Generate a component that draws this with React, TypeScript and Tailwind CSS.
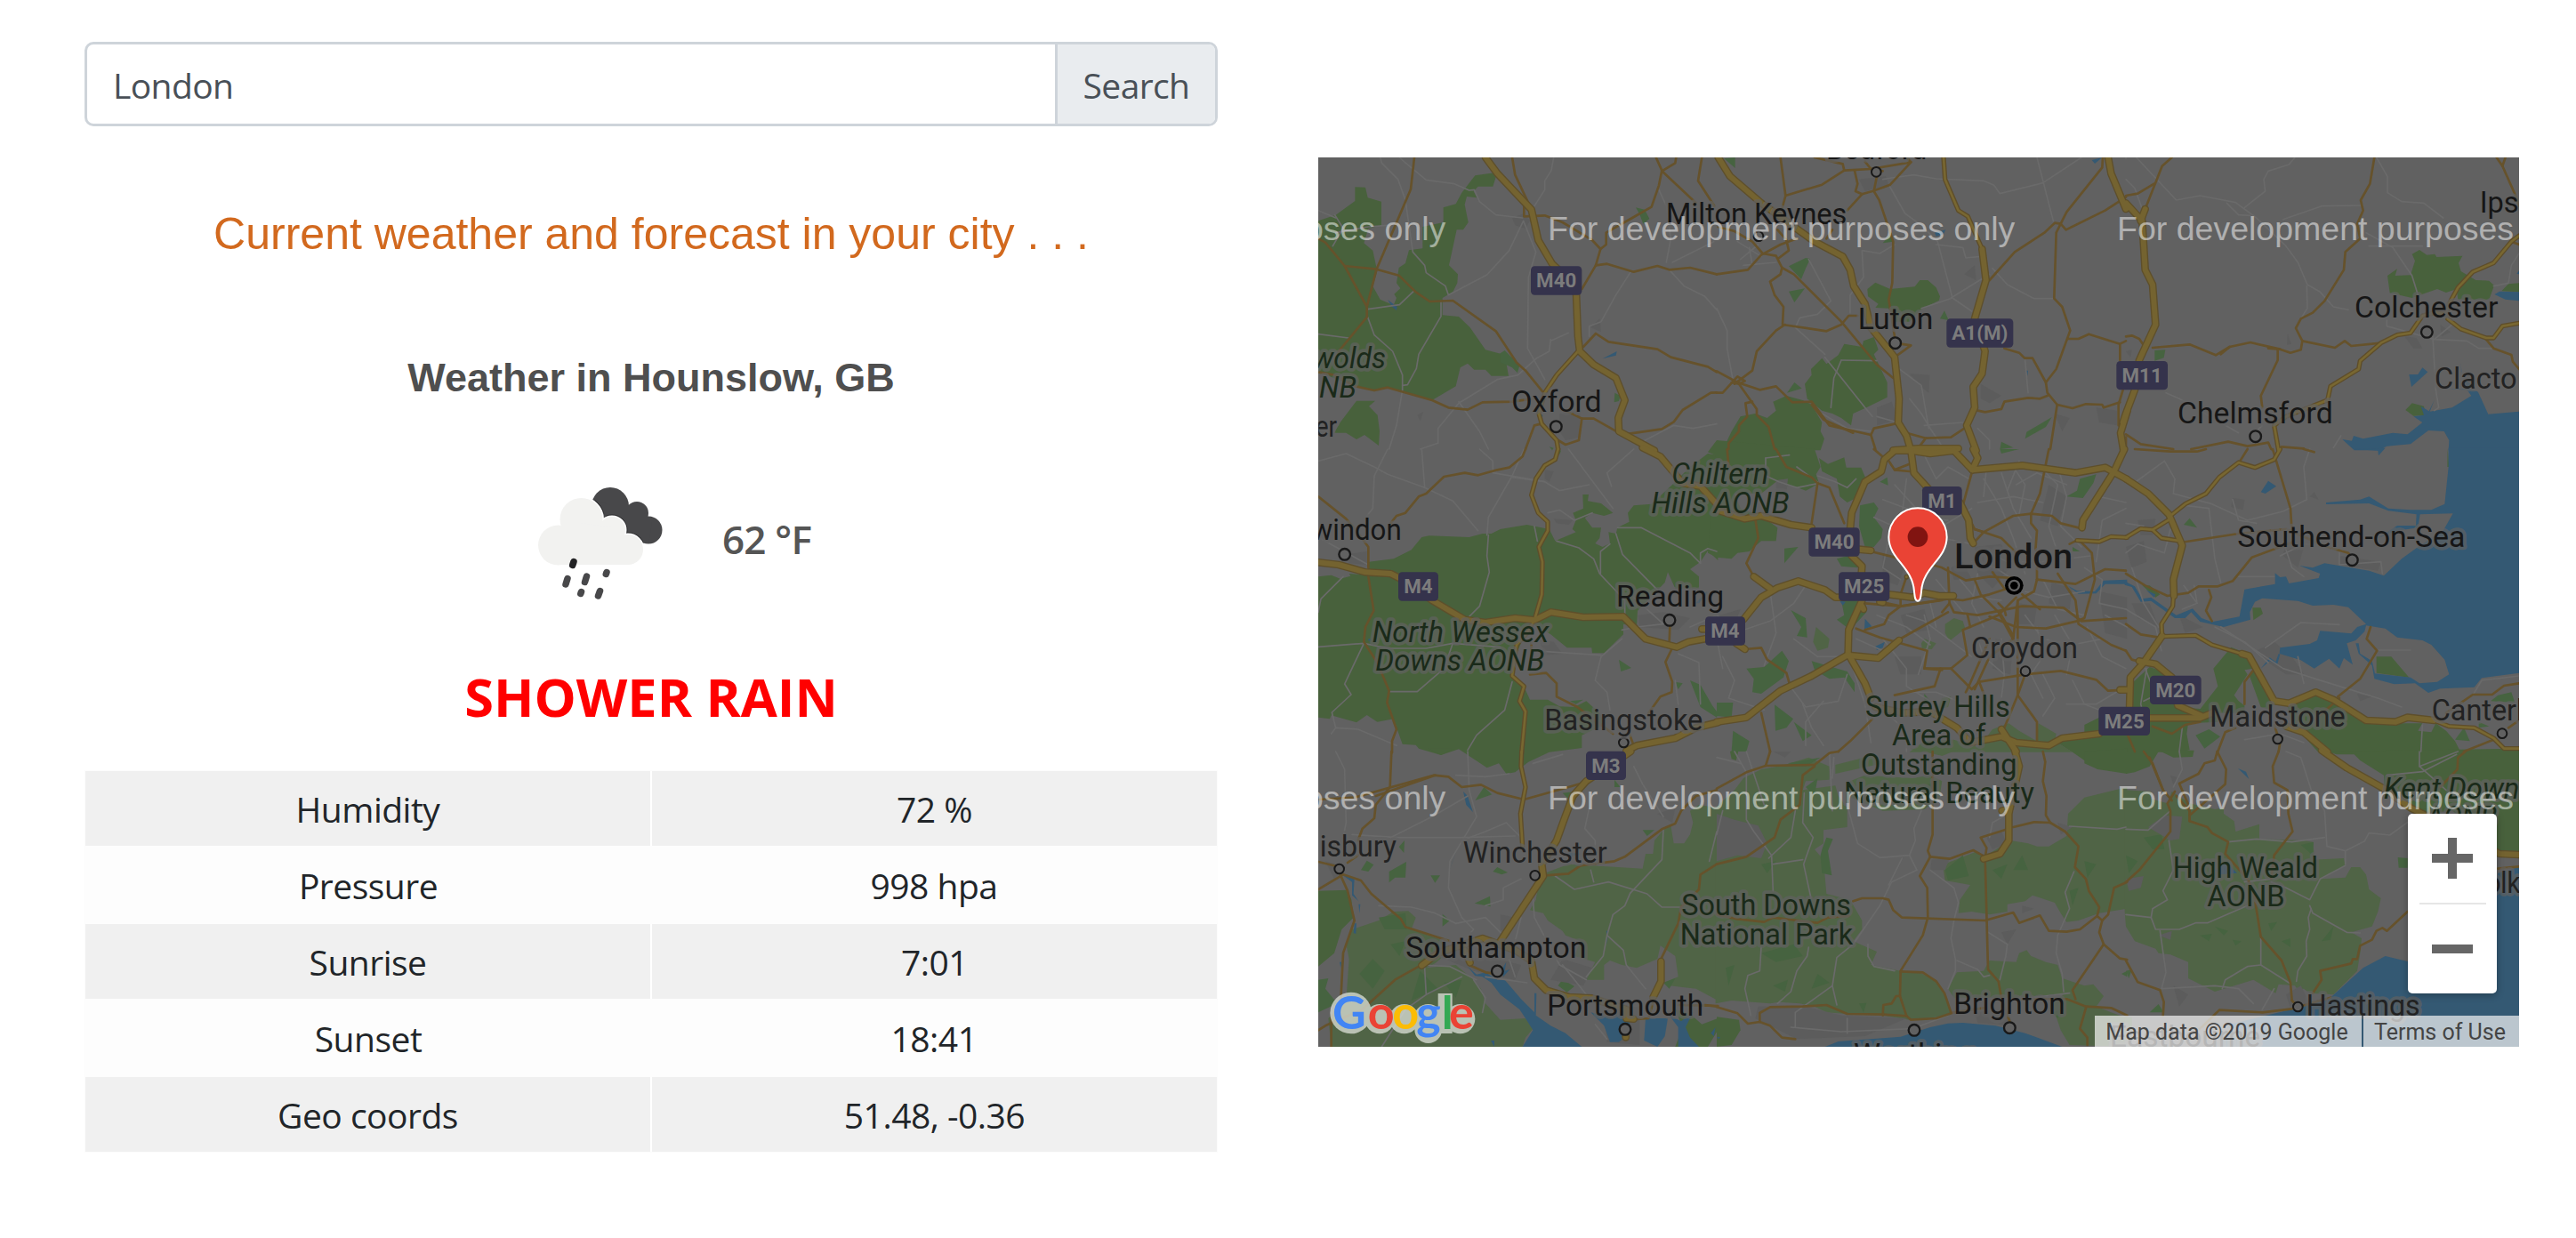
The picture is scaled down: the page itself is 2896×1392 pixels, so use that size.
import React from "react";

type Tile = {
  x: number;
  y: number;
  parks?: string;
  soft?: string;
  woods?: string;
  urban?: string;
  water?: string;
  minor?: string;
  roads?: string;
  trunk?: string;
  motorway?: string;
};

/* Map geometry: each tile holds shapes in its own coordinates; shapes are separated by ";" */
const tiles: Tile[] = [
  {
    x: -36,
    y: -36,
    parks:
      "36,250 95,230 160,183 160,136 195,137 203,172 249,185 249,265 205,276 190,325 220,350 235,420 220,470 245,515 290,535 300,510 292,497 313,478 300,460 308,408 330,393 342,349 388,343 388,270 458,255 458,205 500,193 520,155 565,97 640,86 625,134 575,134 560,150 571,172 537,168 530,195 542,255 525,280 503,280 477,400 507,430 505,460 490,490 455,510 455,568 510,573 548,610 600,685 645,697 665,700 678,773 620,773 600,752 562,752 540,731 515,745 500,808 420,855 270,810 230,822 160,808 36,760;165,857 228,857 207,875 236,905 243,960 240,1008 192,972 165,987 130,965 90,965 110,930",
    woods:
      "1107,205 1137,212 1153,243 1132,260 1120,228;1036,830 1055,840 1050,858 1034,862;650,697 665,687 715,738 708,763 690,745 650,727;815,1012 830,1016 825,1024",
    urban: "690,240 730,225 750,250 735,275 700,265;370,905 390,895 380,925;955,610 985,580 990,625;850,900 920,890 915,980 870,990 850,960",
    water: "995,715 1043,690 1040,704;270,516 302,540 300,552 285,540;785,900 793,905 790,925 785,915",
    minor:
      "36,632 138,645;203,548 310,533 358,487;203,575 225,635 287,690 320,770 320,820 300,940 275,1020;320,805 337,803 367,748 375,700 450,572 450,520;310,36 325,50 400,112 495,125 545,147 562,145 580,185 635,230 725,240;245,36 250,55 305,110 330,180 355,355 395,400 400,425 465,470 475,500 605,432 680,350 728,250 770,355 745,440 742,680 800,785;830,36 822,80 800,115 800,145 765,200;92,230 120,275 85,335;1185,145 1210,200 1225,310 1210,390;1090,422 1040,500 990,590 950,605 950,640;820,655 880,628;510,865 640,785 710,770 770,715 815,690 820,650;510,860 580,960 610,1020;1230,390 1370,320;1220,415 1270,470 1340,505 1380,550;1120,1000 1235,940 1300,950 1380,935;510,865 440,950 440,1000 380,1020;95,290 205,270 270,265;36,215 95,240",
    roads:
      "360,36 348,143 232,415 200,540 200,575 105,690;36,310 60,323 125,402 200,540;125,402 232,413 308,434 365,490 412,522 490,519 635,622 705,728 735,755 800,835;36,760 90,770 160,808 225,822 270,812 420,855 475,880 540,887 590,862 690,860 760,850;690,36 700,95 755,212;730,200 730,235 800,232 860,255 960,315 988,345 972,400 925,480;988,345 1007,330 1007,290 1095,240 1160,203 1185,130 1195,80 1175,36;1195,82 1240,55 1243,36;1195,82 1310,190;1330,36 1317,115 1372,200;972,400 1010,395 1100,422 1180,402 1220,415 1290,408 1380,430;930,675 972,630 1015,658 1180,683 1225,710 1350,742 1380,760;1085,968 1195,952 1235,928 1265,888 1360,830 1380,829;860,885 925,917 965,917 1050,965;925,917 915,990 870,1005 845,990;735,1020 765,940 785,935",
    trunk: "912,690 840,770 800,830 780,900 790,935 840,990 845,1020",
    motorway: "600,36 640,90 755,212 778,315 825,395 905,470 912,640 918,690 965,735 1040,780 1070,855 1048,915 1050,960 1170,1025",
  },
  {
    x: 1344,
    y: -36,
    parks:
      "508,480 535,458 585,480 668,472 685,450 712,450 740,475 753,505 750,518 690,548 650,590 600,590 580,545 535,543 545,530 510,505;297,800 320,770 318,750 355,713 370,733 410,703 430,665 490,675 495,655 530,642 545,685 530,700 575,795 575,845 505,880 460,900 453,940 420,915 390,900 355,890 305,850;190,860 235,840 290,855 320,870 355,930 350,960 363,985 350,1024 20,1024 50,960 80,910 130,900 170,915 200,890",
    woods:
      "243,403 300,375 315,378 300,410 285,447;243,488 297,478 262,525;768,553 782,585 753,580;237,830 262,795 287,815;1040,985 1045,962 1130,912 1110,945;960,995 1000,1015 955,1020;25,40 62,36 62,72;560,325 590,290 595,320",
    urban:
      "650,765 718,770 715,830 690,810;835,430 870,400 875,450;480,110 570,100 580,130 500,150;890,800 960,840 920,865 890,850;1140,900 1190,915 1165,960;1280,880 1350,890 1350,940 1290,930;540,880 590,860 610,920 540,940",
    water: "1265,45 1300,36 1275,57;735,290 772,280 765,295 740,302;1043,755 1050,755 1048,772",
    minor:
      "560,110 590,105 665,95 740,108 900,115 935,130 955,158 1100,122 1230,36;1080,36 1135,250;580,128 635,225 690,265 745,320 795,510 860,555;795,510 690,545;930,410 980,465 1070,512 1140,512;310,380 385,520 340,565 280,577 265,610 365,700;0,545 35,620 35,680 55,790;365,710 500,880 525,910;420,720 540,722;420,720 395,780 385,880;610,745 690,805 715,950;700,940 830,930;450,560 450,500 495,440 490,350 550,360 600,330;70,320 150,370;80,380 140,330;90,400 200,390;110,340 120,400;920,430 790,510;740,330 830,340 840,375 890,370;355,900 440,950 520,960;1040,720 1050,830;880,950 920,990 920,1020;540,910 610,930;650,850 690,900 720,950 760,1010",
    roads:
      "215,36 232,165 355,128 430,80 520,75 655,52 585,128 525,150 490,160 440,215;330,36 425,58 430,80;465,80 475,125 468,150 490,160;540,100 530,150 548,180 595,320 592,460 580,515 600,640;232,165 220,210;390,280 370,310;640,36 655,52;500,50 520,75 560,82;5,270 60,285 120,320 155,360 200,368 220,408 215,430 180,455 195,500 225,540 222,600 370,622 420,600 445,570 475,570;0,430 105,415 150,365 215,330 270,310;205,280 235,315 243,350 210,375;220,408 260,430 420,590 540,735 595,780;230,600 200,620 135,690 120,755 60,800;0,757 70,795 145,820 200,808 255,862 320,860 380,940 520,972 535,1020;0,830 20,830 70,775 95,790 75,800 50,795;75,800 135,885 135,905 175,945 195,1020;120,860 97,865 103,910 75,940 75,960 40,1000 40,1020;320,870 360,920 460,965;520,972 530,950 600,935;640,965 705,983 790,980 850,940;705,983 680,1016;600,710 655,670 620,665;920,450 1005,355 1105,290 1140,257 1160,260 1180,220 1300,70 1302,36;1160,260 1178,280 1310,215 1380,170;1160,260 1145,290 1138,512 1165,540 1192,620 1145,750 1110,795 1115,830 1148,870 1125,1020;1185,648 1220,648 1255,632 1360,665 1360,720;1360,665 1380,655;970,680 1020,695 1038,713 1065,713 1110,795;880,890 905,895 960,885 970,860 1050,847 1090,850 1115,840;1148,870 1200,882 1245,868 1300,870 1305,880 1360,862;1370,820 1355,870 1355,940",
    trunk: "765,36 770,110 815,215 847,235 895,345",
    motorway:
      "5,36 45,100 150,190 330,320 425,370 450,415 462,470 500,530 520,610 600,710 615,850 612,930 640,975 655,1025;895,345 908,450 870,580 905,690 895,765 865,810 870,880 843,940 875,1025;1320,36 1330,90 1380,210;1385,890 1362,965 1372,1025;595,1024 680,1018 815,1018",
  },
  {
    x: 2724,
    y: -36,
    parks:
      "882,435 915,412 908,435 960,433 975,385 965,362 990,348 1015,365 1042,362 1048,372 1135,368 1122,392 1130,420 1180,450 1225,452 1242,468 1225,515 1120,515 1115,480 1080,492 1050,480 1000,497 965,510 890,493;1267,487 1290,463 1326,460 1326,490;943,888 965,865 1005,875 1010,905 970,908",
    woods: "97,687 133,685 128,712 97,722",
    urban: "940,640 980,645 1000,680 970,680;1060,600 1095,625 1065,640;545,630 558,665 543,668;0,690 20,685 15,710",
    water:
      "1188,828 1222,902 1326,893 1326,1024 1088,1024 1090,990 1073,960 1020,957 960,1003 880,1010 855,1024 770,1024 730,987 762,992 768,975 800,985 900,965 950,970 1000,930 970,910 1005,905 995,875 1022,892 1040,855 1025,893 1100,880 1165,840 1150,820 1085,818 1130,815 1180,822;955,768 985,768 1000,745 1018,760 963,810;1243,498 1260,488 1326,490 1326,520 1280,515;1318,428 1326,418 1326,430;1128,730 1134,765 1130,760;1145,790 1165,800 1150,815",
    minor:
      "35,36 170,180 250,165 370,188 440,240 540,335 580,390 612,465 655,490 700,540 750,550;570,36 550,60 480,82 465,110 470,150 400,205;530,245 660,200 800,198;845,36 882,100 882,155 930,185 1005,190 1070,240;810,290 900,340 965,435 985,500;135,830 180,850;1035,640 1045,820 1055,880 1040,890;610,470 612,545 590,580;880,580 880,605 1040,650 1150,655 1190,680 1240,680;1240,470 1290,460 1300,400 1326,360;340,190 380,230 420,232;0,110 30,140 55,210;820,335 1000,335;0,0 0,40;1040,650 1100,600;460,940 430,970;700,1015 725,975;180,850 380,965",
    roads:
      "155,36 122,65 65,210;0,165 40,158 95,125;838,36 823,125 792,180 800,215 780,260 790,310 740,355 735,415 670,520 630,560 590,580 573,612 595,655 590,685 555,695 520,683 420,660 350,675 303,703 215,667 90,678;350,675 320,700;480,680 520,683;595,655 705,678 738,655 760,672 860,662;512,685 512,720 455,840 460,880;0,640 20,637 45,648 60,670;1250,36 1270,65 1310,155 1326,200;1215,650 1240,680 1300,702 1305,725 1326,750;0,970 50,1003 160,1020;220,1020 345,995 410,1010 480,998 490,1020;525,1012 600,1018;1280,36 1270,65;1300,320 1326,330;0,980 0,1020",
    trunk:
      "1326,300 1300,320 1240,392 1170,422 1120,475 1090,530 1080,565 1040,560 1000,570 960,628 915,635 860,662 790,722 785,750 690,808 680,855 540,910 500,940 515,1025;1085,580 1130,615 1215,645 1240,645 1270,605 1326,595",
    motorway: "0,190 55,250 65,415 90,465 100,600 45,720 30,820 0,900 -10,930;65,210 50,250",
  },
  {
    x: -36,
    y: 984,
    parks:
      "207,380 290,370 350,340 385,297 410,292 545,297 590,285 620,285 650,270 740,255 815,270 835,310 905,280 893,270 905,240 895,215 930,200 928,153 948,153 945,175 990,183 1030,215 1000,225 960,215 935,232 960,265 990,265 985,300 970,318 995,330 1020,318 1015,280 1040,285 1045,265 1085,245 1080,215 1100,190 1160,185 1230,120 1290,60 1350,15 1384,20 1384,375 1350,343 1325,380 1290,405 1320,430 1320,470 1240,470 1215,415 1205,450 1113,545 1110,600 1065,590 1065,625 1000,688 960,688 958,670 875,670 820,625 760,590 735,620 700,700 690,763 735,812 750,845 810,845 850,868 900,870 940,850 985,890 1000,930 925,965 925,1008 815,1022 745,1055 700,1090 670,1095 645,1060 605,1075 510,1012 450,1032 375,1010 365,998 320,995 290,910 235,920 200,897 165,922 80,898 75,910 36,905 36,430 80,425 110,437 145,428 140,420 205,425",
    woods: "1050,710 1092,738 1057,750;1290,780 1325,795 1365,865 1384,890 1380,905 1325,870;1240,785 1265,790 1250,810;840,0 855,5 850,18;885,850 930,845 905,860",
    urban: "830,235 895,240 880,255 840,250;780,640 830,650 860,690 800,695;1115,560 1200,550 1290,570 1250,610 1120,600;130,355 200,345 200,390 140,385;800,70 830,75 815,110 800,100",
    water: "1310,520 1345,480 1352,483 1320,520;205,640 212,640 212,646 205,646;640,655 650,655 650,660",
    minor:
      "610,290 605,360 613,415 580,530 540,570;840,310 915,333 965,370 985,420 1070,510 1070,560;1020,320 988,345 988,420;1045,265 1125,265 1290,350 1325,385;1040,285 1062,355 1180,475;1325,385 1325,350 1350,335 1380,345;36,667 190,655 270,672 400,672 490,655 650,668;490,655 460,740 370,818 275,818;190,655 125,792 147,828 82,888 95,940 80,960;120,430 45,505 36,550;690,785 665,880 570,965 540,1015;385,0 395,130 490,175 575,275;395,130 270,85 225,60 130,15 36,40;270,0 225,90 220,200 200,225;730,0 690,90 610,230 605,290;690,95 800,110 850,140 950,120;880,0 1030,200;1025,125 1010,80 1100,0;580,0 625,40 625,80 800,110;760,680 990,695;1060,610 1110,600 1200,590;1060,640 990,700 970,780 1010,820 1020,880;1250,690 1320,720 1325,860;765,260 775,310;810,215 850,205 900,240 960,215;40,300 205,390;95,940 170,945 300,1000;1100,500 1200,590;1290,600 1380,560;1240,780 1255,900",
    roads:
      "735,0 725,25 680,62 640,70 575,88 530,80 460,93 400,150 375,160 330,215 300,225 280,250;36,160 130,235 160,270 205,330 205,400;205,430 223,545 195,600 190,650 235,720 275,815 268,855 300,945 285,985 285,1024;755,650 755,700;750,760 805,755 840,790 840,835 910,870 950,900 1030,960;1222,600 1220,650 1228,675 1207,718 1230,785 1228,820 1190,835 1150,890;1085,960 1100,1000",
    trunk:
      "845,0 835,35 800,55 770,100 755,155 778,215 810,245 810,275 780,330 792,380 790,490 765,577;765,577 740,620 705,660 690,765 730,800 715,850 735,885 722,1025",
    motorway:
      "36,382 105,390 195,415 280,420 330,445 420,510 530,575 600,585 700,570 765,577 820,550 930,567 1065,565 1140,640 1245,668 1285,650 1350,638;1130,-5 1190,25 1265,115 1325,125 1384,190;1075,1018 1110,1000 1240,975 1310,940 1384,922;1330,607 1350,607",
  },
  {
    x: 1344,
    y: 984,
    parks:
      "-4,0 -4,20 -30,10 0,-30 330,0 350,60 335,85 345,115 320,130 300,140 270,128 240,122 200,110 150,150 60,150 80,200 150,225 205,265 200,310 150,310 110,345 70,350 50,370 0,365 -30,350;345,30 375,50 430,28 437,62 487,62 503,100 470,165 440,180 415,160 405,100 355,75;1140,985 1240,965 1240,930 1290,905 1300,960 1384,955 1384,1070 1285,1080 1240,1050 1200,1022",
    soft: "770,590 800,570 830,580 838,605 785,647 770,620;690,655 700,640 740,655 725,675 692,672;335,600 380,640 375,670 340,680 325,650;760,840 790,835 780,870 740,880;880,1005 900,985 930,945 985,925 1020,950 1080,985 1085,925 1145,960 1140,985 1200,1022 650,1022 700,985 800,980",
    woods:
      "483,190 530,180 545,200 530,230 560,270 555,300 530,330 500,330 480,260;405,370 440,360 480,380 475,400 420,395;420,510 500,505 505,550 450,610 405,575 430,560;228,335 275,330 228,385;250,543 300,570 305,635 270,630 285,600;100,740 160,735 220,680 243,715 225,770 150,825 120,820 125,775;320,715 370,730 440,750 465,790 465,820 430,770 380,775 330,745;195,862 258,910 235,940 198,950;55,950 110,985 100,1020 50,1020;260,920 320,965 290,985;0,855 55,855 50,905 0,900;550,110 575,95 578,122;1180,160 1215,140 1225,100 1280,85 1270,115 1235,165;955,0 1020,0 960,15;700,825 725,855 700,860;1200,330 1225,345 1200,345",
    urban:
      "870,330 960,320 990,400 930,470 880,420;1020,520 1080,530 1070,590 1010,590;200,105 240,100 235,150 200,150;620,560 700,540 720,610 640,620;1120,120 1180,160 1150,260 1090,240;1290,480 1384,500 1384,640 1310,620;600,700 690,700 690,760 620,760;790,400 830,380 860,440 800,440;940,640 1000,650 990,760 930,740;560,350 640,380 610,460 560,440;1130,450 1200,470 1190,540 1120,520;10,560 80,540 60,590 20,600",
    water: "1180,458 1215,478 1275,480 1305,443 1384,440 1384,455 1310,455 1280,487 1220,488;415,512 435,515 425,527;500,572 523,598 498,607;535,665 567,650 560,670 540,678",
    minor:
      "165,30 245,20;165,30 165,90 210,110 270,130 345,115;600,120 700,230 780,240;560,170 640,200 760,300 860,320;530,230 640,280 760,260 860,200;640,100 620,260 640,420;700,20 740,100 780,60 850,100;900,100 960,200 1000,300 1040,420;960,80 1000,200 1060,300;880,180 1000,160 1100,180;1000,60 1040,120 1020,220;1090,60 1150,120 1120,260 1160,380;1150,60 1180,160 1160,260 1230,330;900,340 980,380 1100,380 1260,360;860,380 940,400 1000,440;880,420 860,520 900,600;820,440 870,500 960,510;640,560 700,580 780,640 860,700;540,560 640,600 720,660;560,640 640,740 640,800 720,850;700,560 720,640 680,760;1040,480 1120,500 1240,480;1040,560 1100,640 1200,660 1300,640;1080,600 1100,700 1060,760 1100,840;1140,560 1200,660 1180,760;1250,600 1300,700 1380,740;1240,400 1300,440 1290,520 1380,540;1280,380 1300,240 1380,200;1290,160 1380,180;960,640 970,760 960,840;880,640 900,700 970,760;1100,760 1140,840 1100,900;1200,780 1240,860 1290,880;0,560 60,620 180,580 260,520 300,460;180,480 200,620 160,730;260,640 340,700 420,700;20,700 60,780 40,840 160,880;290,860 320,940 360,1000;240,790 300,870 410,850 440,760;300,1000 300,920 360,850;460,740 500,860 520,990;560,860 640,900;640,820 740,820 860,870;1180,860 1280,860 1380,800;1020,40 980,140;910,60 900,160;600,260 640,360 700,360;740,440 840,560;720,520 740,600;580,300 560,400 620,440;1100,440 1150,540 1240,560;340,90 400,110 440,130 470,100;470,640 560,680;0,640 20,740;270,60 345,115;1010,120 1080,80 1180,120;1310,560 1384,600;560,880 640,950 640,1020",
    roads:
      "520,345 600,365 690,380 760,400 840,443 920,430 1000,435;640,430 620,490 620,530 580,560 565,590 500,610;500,520 620,530 780,505 830,510 920,490 980,470;780,400 785,520 800,550 880,560 1030,530 1170,535 1230,580 1380,570;550,515 620,530 760,510;470,605 550,635 710,680 700,740 790,740 845,695 830,610 950,560 1010,500;610,645 690,600 780,550;870,270 900,280 1000,225 1060,218 1130,225 1160,250 1220,265;870,270 960,300 1010,350;865,318 900,280;1060,218 1060,250 1080,275 1075,340;1080,400 1080,440;1120,0 1090,150 1060,218;1190,320 1220,305 1265,350 1275,440 1240,570 1215,580 1110,605 1010,600 920,565;1080,440 1210,455 1310,405 1380,410;1080,440 1070,480 1015,510 1000,640;1015,510 1015,830 1080,920 1080,1000;1150,420 1210,510 1220,590 1330,660 1380,680;955,560 1010,660;920,640 850,800 840,820;1000,640 920,700 870,810;790,740 860,810 885,785 1040,760 1160,748 1280,778 1320,815 1384,812;755,740 735,800 600,830;885,785 930,900;525,910 450,985 410,1020;150,890 180,1020;130,235 140,300 100,385 125,430;95,675 150,670 170,710 235,755 245,790;340,115 380,130 430,250;340,115 320,250;200,0 235,60 320,95 340,115;35,0 40,60;580,40 600,70 650,75;530,0 565,30;860,80 830,190 870,270;870,440 890,490 960,560 1000,630;1015,830 970,940;785,520 760,550;845,555 855,600;1030,490 1090,540;930,415 970,470;950,520 970,540 975,560;1040,760 1015,830;600,70 650,50;700,740 760,745",
    trunk: "1215,308 1290,312 1330,295 1384,298;640,430 640,432",
    motorway:
      "865,0 880,30 862,70 800,5 720,15 655,5 600,5 565,35 555,75 500,110 455,215 450,270;455,360 490,395 488,420;490,510 445,610 443,690 500,790 520,840;535,870 630,890 720,885 810,940 855,990 960,970 1010,990 1120,1000 1165,975 1290,960;862,70 1030,55 1210,80 1310,62 1384,102;655,5 665,80 720,140 820,180 850,240 855,300 865,318;0,205 95,235 150,225 250,255 320,265;480,338 520,342;90,575 150,500 205,468 275,445 365,475 400,500 430,500;580,490 660,500 700,485 750,495 798,495;125,430 180,470;65,655 95,675;0,920 100,905 215,815 320,765 440,695 545,705 615,645;1375,0 1340,75 1235,240 1232,265;960,945 1010,1020;490,530 495,540;550,515 560,517;1360,812 1384,812",
  },
  {
    x: 2724,
    y: 984,
    parks:
      "355,668 385,680 430,700 430,740 400,745 410,760 365,830 380,850 400,865 400,890 240,890 310,800 295,740;415,760 435,740 500,850 490,880 455,870;20,790 80,735 110,745 170,800 170,870 300,880 310,920 210,925 205,960 215,1015 180,1022 0,1022 0,960 20,950;540,850 640,825 720,850 790,905 920,925 1000,925 985,950 1030,955 1045,925 1080,950 1110,985 1130,1024 650,1024 560,925;845,700 895,700 955,770 845,755;427,535 455,535 462,555 430,577;55,460 80,460 115,490 100,500;1085,0 1090,60 1084,60",
    woods: "1230,850 1255,830 1300,820 1312,855;1110,980 1140,940 1160,985;235,965 280,945 318,970 265,1010;195,255 215,233 240,265;1190,920 1225,935 1190,940",
    urban:
      "360,165 400,170 395,205 355,195;620,160 635,145 650,170;0,330 60,310 70,380 20,400;20,520 80,520 110,600 40,570;440,680 500,650 560,700 600,760 540,760 480,720;780,825 830,835 790,850;540,310 600,330 580,400 530,360;720,360 860,380 850,410 720,390;40,240 100,235 90,290 50,290;180,560 260,600 200,620",
    water:
      "1088,-4 1088,60 1075,185 1030,205 960,205 885,200 820,160 790,170 675,180 675,186 820,183 885,208 980,220 978,258 915,258 850,300 915,275 985,265 992,220 1103,217 1070,275 985,330 930,370 870,427 820,410 670,385 630,400 585,393 655,420 650,435 550,453 540,430 520,432 503,418 503,455 400,473 383,565 290,583 255,570 225,538 170,560 85,500 55,505 30,463 0,448 -4,448 -4,458 20,465 50,515 85,512 165,570 200,570 220,550 250,582 330,600 420,575 418,550 435,515 460,503 580,512 630,528 700,525 750,533 810,590 780,600 760,622 655,613 645,645 620,657 520,670 518,690 590,712 635,740 685,707 720,740 735,705 765,727 745,655 775,645 805,615 810,595 875,605 915,635 1000,645 1030,660 1075,710 1090,760 1050,785 990,790 960,770 840,757 830,715 790,690 785,655 775,655 785,690 830,730 838,775 905,793 975,790 1020,822 1060,808 1175,803 1200,772 1326,755 1326,-4;455,145 480,107 507,125 470,150;770,0 875,-4 852,22 850,5;455,740 485,703 505,718 515,690 520,692 510,728 485,715;68,475 100,490 95,500",
    minor:
      "130,40 165,100 160,150 290,185 410,240 530,210 610,170 600,60 620,0;200,190 280,200 300,370 320,450;0,350 40,320 130,350 150,270;320,600 530,740 640,775 850,840 930,870;470,670 590,585 720,592;530,310 560,400 600,430;720,350 720,390 860,380 865,420;195,460 240,520 190,540;65,740 100,830 60,850;1000,930 995,1020;1170,830 1200,780 1326,765;380,430 500,430;850,678 960,678;580,700 600,790;130,40 20,120;0,540 100,600 120,680;20,400 60,520 110,600;360,170 380,240 440,250;230,460 240,520;300,600 400,650 480,720;70,740 50,860 60,900;190,940 180,1020;0,250 60,260;520,360 600,320 700,330;400,980 520,960 600,990",
    roads:
      "495,0 555,200 560,280;185,315 380,285 540,270 680,330 750,350 760,365;0,420 65,460 140,495 210,485 245,463 310,463 360,445 425,365 560,315;280,475 288,500 270,545 290,580;0,590 50,625 110,635;715,835 790,775 847,680 812,640 825,600;430,745 400,785 400,860;500,930 520,990 515,1020;310,1020 335,955 370,940;0,680 20,710 40,715;90,935 155,960 200,930 250,920;1080,890 1170,828 1235,828 1275,798 1326,790;1140,1020 1240,980;1290,940 1326,915;410,0 385,40;0,950 30,1020;30,0 150,8 240,8 270,0;600,0 635,10;640,910 720,840",
    trunk:
      "520,0 500,35 435,62 380,45 315,95 270,150 200,185 150,225;0,298 50,268 90,272 150,235;90,272 120,300 185,310;160,500 158,530 120,590 122,630;122,632 235,628 290,660 390,690;1040,915 1090,935 1175,940 1240,975 1275,1010 1326,1010",
    motorway:
      "0,100 75,150 145,220 190,325 160,440 162,495;122,630 60,720 15,770 12,880;45,715 100,725 155,770 175,865 255,900;75,907 250,907 290,890;390,690 415,697 500,850 550,857 640,820 700,845 810,915 910,920 950,905 1040,915;540,935 600,955 680,1022",
  },
  {
    x: -36,
    y: 2004,
    parks: "36,470 135,467 148,500 155,560 115,600 90,680 36,725;1240,870 1290,885 1330,920 1384,900 1384,940 1350,996 1240,996 1265,930;410,-10 450,12 490,-10",
    soft:
      "150,600 240,570 290,540 340,538 365,560 350,600 450,635 470,680 430,715 400,730 500,720 560,770 585,800 600,850 650,905 735,900 760,935 735,965 725,996 80,996 70,900 130,840 140,700 130,650;780,440 800,410 840,395 880,380 1130,395 1140,345 1165,345 1170,300 1200,265 1225,250 1235,310 1270,310 1290,280 1300,240 1290,200 1320,180 1384,190 1384,840 1310,800 1220,790 1200,780 1250,760 1240,690 1190,655 1180,700 1110,730 1060,720 1020,705 1000,720 1000,770 940,770 970,710 900,690 920,640 870,620 860,605 810,570 795,545 750,535 770,500",
    woods:
      "565,165 595,120 622,145;275,405 333,372 330,425 295,425 275,442;180,400 200,368 223,382 205,405;415,418 447,418 430,443;563,512 615,488 617,523;455,548 480,570 455,590;308,322 327,300 325,342;1130,265 1170,265 1145,285;625,405 640,390 675,408 655,415;845,790 860,768 900,792 875,812;1035,95 1055,120 1035,120;36,770 70,765 60,800 100,850 36,880;240,560 330,545 335,600 260,600;175,750 220,700 260,740 220,800;380,740 440,800 350,840;280,650 330,640 310,690;350,940 400,925 380,975;460,780 520,770 500,830;860,140 900,135 885,165;1200,780 1240,765 1220,800",
    urban: "440,690 530,640 640,700 720,720 700,770 560,740;860,700 960,730 930,790 820,770;650,550 700,560 680,620 650,600;1000,870 1120,860 1120,990 1010,980;60,370 130,390 90,430;1180,210 1240,190 1230,240",
    water:
      "540,725 570,752 600,745 640,770 665,770 720,835 765,880 765,815 772,815 770,890 820,925 870,950 925,996 725,996 760,940 735,900 725,885 715,870 650,820 620,780 590,760 565,757;955,880 1030,900 1060,870 1090,900 1075,960 1050,980 1020,980 1000,925;1140,900 1215,900 1205,960 1180,996 1135,975;1220,890 1260,910 1300,880 1275,930 1290,965 1320,996 1250,996 1250,930;115,415 158,430 155,480 172,505 150,485 150,440;525,135 540,150 558,205 535,180;500,340 475,412 490,370;158,580 165,580 163,615 155,612;655,735 670,710 665,740 682,735 660,760;618,975 630,975 630,996;880,340 920,345 890,355;1360,950 1376,930 1370,960;172,515 178,515 175,545;108,710 114,710 112,730;1008,605 1014,605 1010,650",
    minor:
      "95,0 125,60 130,240 120,290;150,280 300,290 520,290 700,285;540,0 545,130 570,220 480,370 475,460 520,560;240,520 350,525 430,545 500,580;835,420 900,465 1015,440 1145,480 1195,525 1255,525;1088,478 1070,520 1030,550 1010,620 997,690 940,760;1010,620 1065,670 1075,720 1140,800;955,400 965,440;1200,265 1195,365 1088,478;760,490 765,560 850,720 940,770;600,520 660,500 660,460 720,430;395,730 400,820 330,870 250,996;560,770 600,830 590,880;400,820 520,760;950,190 935,260 970,300 970,380;1100,50 1130,110 1200,220;970,920 1010,970;730,300 670,240 600,270 520,300;280,290 420,220 540,150;500,80 600,85 680,75;760,40 860,10;500,580 600,560 660,620;470,700 560,600 520,560;380,720 480,725 570,770;600,760 740,780;1380,270 1355,370;720,560 700,640;860,720 940,820;680,700 700,760",
    roads:
      "283,0 278,120 230,180 225,225 185,260 170,300;36,162 160,155 425,80 475,85 520,120 585,112 640,140 730,162 880,120 950,100;230,150 430,80;36,372 110,390;36,465 120,415 180,435 215,480 315,565 330,592 480,640;110,415 135,470 158,570 120,680 112,840 80,900 80,996;375,725 295,770 185,870 60,925 36,940;800,418 880,412 920,385 1035,370 1070,355 1195,262 1240,243 1260,200 1310,150 1380,130;1380,380 1325,415 1320,465 1260,525 1250,580 1192,700;545,720 600,745 640,750;1340,855 1380,860;135,375 170,350;1080,905 1150,900 1170,830;1250,855 1384,858",
    trunk: "722,0 720,50 735,120 718,210 725,320",
    motorway:
      "1090,0 940,100 895,150 865,230 840,300 790,380 795,420 650,640;385,722 440,680 590,630 700,670 755,705 765,765 805,805 880,828 960,832 1075,870;548,712 530,670;1192,708 1192,775 1165,830;1075,870 1075,900 1100,902;1073,960 1073,964",
  },
  {
    x: 1344,
    y: 2004,
    parks: "0,895 75,905 80,940 50,990 0,996;1240,0 1384,-10 1384,75 1285,60 1240,40;45,0 75,-10 65,30 50,25",
    soft:
      "650,-10 820,-10 760,15 720,5;-4,190 60,130 90,90 150,60 220,48 310,20 380,50 380,95 300,100 290,130 400,115 410,150 440,190 440,255 360,265 360,310 330,330 360,365 370,480 450,500 490,570 490,600 460,640 540,675 520,720 620,740 680,745 740,770 765,810 790,880 750,895 650,905 560,890 440,885 370,880 330,860 280,850 210,845 180,850 50,840 -4,850;450,100 500,80 660,90 720,80 760,100 750,160 700,195 560,200 440,150;400,45 480,25 520,10 560,40 400,75;765,400 780,375 870,340 910,350 990,300 1050,310 1080,320 1120,320 1180,285 1185,210 1240,155 1384,120 1384,530 1290,545 1220,570 1180,575 1160,545 1140,510 1065,485 1040,505 980,515 980,540 920,550 860,540 815,545 820,500 855,450 770,435;780,800 810,745 900,740 920,705 1010,710 1020,680 1045,670 1060,690 1110,710 1150,720 1165,765 1240,790 1270,785 1305,825 1280,860 1330,880 1384,900 1384,996 1190,990 1160,940 1130,850 1170,820 1000,830 800,830;535,905 580,900 580,925 540,925",
    woods:
      "95,295 125,310 120,340 100,340;370,290 392,295 375,335 388,418 355,410 350,350 355,330;770,400 830,350 850,420 780,435;150,680 260,650 290,690 200,710;930,400 980,380 960,430;1030,350 1050,400 1000,400;190,790 240,770 230,810;300,120 340,90 330,150;30,730 60,720 40,790;1240,370 1280,380 1250,425;1190,470 1220,460 1200,520;150,380 200,370 170,410;480,850 505,848 495,880;700,115 750,100 720,160;1365,750 1384,740 1384,760;240,40 350,20 300,50;340,750 380,780 320,800;1130,880 1160,870 1150,900",
    urban: "60,230 140,250 170,310 150,360 70,350 0,370 0,210;725,365 785,360 770,400 720,400;1150,240 1200,255 1160,280;910,290 960,270 980,310 930,330;1030,520 1070,530 1030,545;140,860 300,860 420,890 640,900 500,960 270,970 190,930 130,900;960,610 1010,600 980,650;870,880 980,870 1000,925 880,915;190,0 250,0 230,20",
    water: "365,996 410,978 620,962 720,930 780,917 830,915 940,925 1040,950 1165,996;0,962 12,964 6,970",
    minor:
      "60,0 100,70 100,230 125,270 185,350 190,470;265,200 250,290 175,360;395,20 390,90;295,140 290,240 325,290 293,380 318,495;440,180 475,310 550,358 650,350 670,300 665,260 690,200;650,350 675,400 590,440 565,490 550,520 460,650 405,695 390,790 405,855;150,660 145,740 105,755 95,800 115,890;310,660 305,690 270,740 250,810 205,850;390,790 265,880 265,930;510,650 510,690 530,725 600,740;625,360 580,450;720,400 800,460 815,510 800,570 790,630 805,700 805,740 780,800;1205,405 1175,475 1190,530 1150,620 1145,680 1165,750 1170,810;1190,252 1350,262 1380,255;810,705 880,735 900,760 920,755;915,610 980,650 975,690 955,770;985,840 1190,815;380,0 390,200;0,20 80,40;190,380 290,365;920,290 930,240 1000,200;0,280 20,200;440,900 440,950;250,930 420,945 660,935 780,890;100,0 160,180",
    roads:
      "0,125 100,70 165,48 330,45 380,5 410,0;330,50 290,80 280,180 215,230 195,290 100,355 0,380;180,0 165,48;728,0 728,280 712,335 720,355 685,420 710,460 712,560 695,620 620,740 618,825;720,355 785,362 865,333 905,355;1000,255 1070,238 1125,240 1175,270 1220,320 1208,390 1245,430 1255,470 1290,525 1283,555 1300,570 1290,610 1305,650 1200,805 1210,835;985,260 890,290 910,325 905,360 915,735 950,775 960,830 980,890 990,915;1100,0 1108,35 1100,100 1112,150 1110,215 1125,240;460,505 490,495 560,495 580,500 595,535 625,560 905,570 1000,543 1020,578 1090,553 1120,605 1180,608 1225,600 1283,555;1300,570 1320,550 1340,460 1384,440;1305,650 1360,698 1384,702;0,550 70,565 160,575 190,560 340,578 375,560 445,555;0,862 70,883 105,918 145,912 180,925 220,965 265,970;145,912 145,882 180,862 290,860 370,855 440,885 560,887 640,892 655,905 740,900 800,880 900,865;560,890 562,855 590,850 605,825 618,825 640,892;620,742 695,745 740,775 768,815 790,880;1000,835 1180,835 1245,860 1330,865 1384,890;1245,865 1225,935 1250,965 1250,990",
    motorway: "1005,-4 1020,50 985,210 985,300 955,345 900,362;962,200 970,198",
  },
  {
    x: 2724,
    y: 2004,
    parks: "0,0 110,0 80,50 30,70 0,75;110,-4 230,-4 225,18 160,20;680,0 1326,-10 1326,340 1255,335 1200,260 1100,200 990,210 870,125 870,80 790,30 770,10 710,10",
    soft:
      "-4,130 85,135 85,160 140,175 155,135 215,175 300,195 330,190 330,210 365,235 370,270 450,245 450,295 600,300 630,305 635,345 630,365 735,360 740,385 660,430 740,425 760,390 790,390 810,415 820,465 860,495 850,540 830,590 760,610 795,630 790,680 780,740 700,820 620,815 600,800 580,805 570,790 515,785 505,815 430,770 300,810 210,765 210,710 150,685 110,680 100,665 30,640 0,590 -4,540;-4,895 20,896 20,996 -4,996;630,860 690,800 640,870",
    woods:
      "917,357 950,360 950,392 920,392;590,315 633,305 630,350;80,880 110,852 127,880;60,290 120,280 130,330 90,330;0,350 40,370 10,410;250,620 290,615 280,640;480,580 510,575 490,605;660,640 700,590 690,635;525,640 555,630 555,660;300,590 345,605 330,620;0,740 20,735 10,765;360,635 390,640 370,655",
    urban: "75,255 130,215 190,220 180,295 150,300;0,430 60,420 50,460 10,470;110,620 155,605 150,635;540,820 590,790 630,870 560,880;160,790 210,820 180,860;150,80 180,90 160,110",
    water: "300,996 350,920 470,891 600,860 690,830 800,730 875,690 950,708 1100,650 1240,470 1255,410 1326,390 1326,996;378,57 405,68 415,93;300,400 340,375 375,410 320,415",
    minor:
      "540,0 590,20 625,130 670,200 678,320 740,335 805,302 820,275 890,282 990,210;345,305 440,295 560,305 670,290;620,520 630,545 745,610 790,612;625,530 615,560 620,600 608,640 610,690 580,740 575,775;490,440 540,460 620,500 655,430 740,385;0,550 85,560 100,600 180,600 235,578 275,578 410,520;85,560 90,530 140,500 125,470 160,400 145,300;455,625 455,720 550,780;455,720 410,725 335,770 325,800;115,605 135,745 120,800;990,0 990,50 1120,0;880,80 1000,68 1115,10;990,50 1080,130;0,262 75,265 150,200;740,335 740,380;400,440 490,430;120,800 300,790 380,800 430,850;460,870 500,800;180,0 190,60 160,120",
    roads:
      "80,20 125,130 155,165;60,0 90,40 125,130;0,440 45,400 150,270 150,200 140,175 165,135;170,150 215,200 215,235;308,0 300,30 265,40 245,75 180,108 215,190 215,235 275,255 290,275 345,305 335,345 410,430 430,470 455,625 525,705 555,780 560,840;308,0 338,60 335,110 215,215;515,0 495,50 500,105 545,130 548,210 562,270 500,350 490,430;1145,0 1120,20 1118,60 1060,120;630,815 660,770 655,740 760,715 765,700 780,700 790,655 830,635 845,605 865,595 880,605 950,540;0,705 40,778 115,805 128,845 125,891;245,940 315,872 460,880 560,868 690,830;1255,395 1326,388;560,840 580,861",
    motorway: "660,-4 745,55 870,125 960,190 1010,215 1260,345 1326,348",
  },
];

const parts = (s?: string) => (s ? s.split(";") : []);

function Areas({ k, fill }: { k: "parks" | "soft" | "woods" | "urban" | "water"; fill: string }) {
  return (
    <g fill={fill}>
      {tiles.map((t, i) => (
        <g key={i} transform={`translate(${t.x} ${t.y})`}>
          {parts(t[k]).map((p, j) => (
            <polygon key={j} points={p} />
          ))}
        </g>
      ))}
    </g>
  );
}

function Lines({ k, stroke, width }: { k: "minor" | "roads" | "trunk" | "motorway"; stroke: string; width: number }) {
  return (
    <g fill="none" stroke={stroke} strokeWidth={width} strokeLinejoin="round" strokeLinecap="round">
      {tiles.map((t, i) => (
        <g key={i} transform={`translate(${t.x} ${t.y})`}>
          {parts(t[k]).map((p, j) => (
            <polyline key={j} points={p} />
          ))}
        </g>
      ))}
    </g>
  );
}

type Label = [text: string, tile: number, x: number, y: number, width: number, kind?: "park" | "parkItalic" | "city" | "small"];

const labels: Label[] = [
  ["wolds", 0, 22, 748, 240, "parkItalic"],
  ["NB", 0, 43, 845, 120, "parkItalic"],
  ["er", 0, 30, 978, 67, "small"],
  ["Oxford", 0, 692, 895, 298],
  ["Milton Keynes", 0, 1213, 262, 604],
  ["Bedford", 1, 373, 42, 334],
  ["Luton", 1, 480, 614, 248],
  ["Ips", 2, 1197, 222, 126],
  ["Colchester", 2, 775, 577, 478],
  ["Clacto", 2, 1045, 815, 272, "small"],
  ["Chelmsford", 2, 178, 933, 518],
  ["windon", 3, 18, 307, 297],
  ["North Wessex", 3, 222, 650, 590, "parkItalic"],
  ["Downs AONB", 3, 233, 748, 564, "parkItalic"],
  ["Reading", 3, 1045, 532, 357],
  ["Chiltern", 3, 1232, 118, 321, "parkItalic"],
  ["Hills AONB", 3, 1163, 216, 460, "parkItalic"],
  ["Basingstoke", 3, 803, 947, 528, "small"],
  ["London", 4, 805, 403, 393, "city"],
  ["Croydon", 4, 862, 706, 354, "small"],
  ["Surrey Hills", 4, 505, 902, 482, "park"],
  ["Area of", 4, 595, 998, 310, "park"],
  ["Outstanding", 7, 490, 77, 520, "park"],
  ["Natural Beauty", 7, 433, 175, 636, "park"],
  ["Southend-on-Sea", 5, 380, 330, 762],
  ["Maidstone", 5, 287, 935, 451, "small"],
  ["Canterb", 5, 1035, 916, 335, "small"],
  ["isbury", 6, 45, 353, 253, "small"],
  ["Winchester", 6, 528, 376, 480, "small"],
  ["Southampton", 6, 335, 697, 603],
  ["Portsmouth", 6, 812, 891, 521],
  ["South Downs", 6, 1265, 552, 566, "park"],
  ["National Park", 6, 1260, 650, 578, "park"],
  ["Brighton", 7, 803, 885, 370],
  ["Worthing", 7, 466, 1055, 405],
  ["High Weald", 8, 162, 425, 484, "park"],
  ["AONB", 8, 278, 523, 256, "park"],
  ["Hastings", 8, 612, 891, 378, "small"],
  ["Kent Down", 8, 873, 158, 452, "parkItalic"],
  ["AONB", 8, 1018, 255, 232, "parkItalic"],
  ["olk", 8, 1218, 478, 110, "small"],
  ["Eastbourne", 7, 1330, 995, 502, "small"],
];

const dots: [tile: number, x: number, y: number, r: number][] = [
  [0, 838, 944, 19], [1, 538, 85, 16], [1, 141, 302, 16], [1, 602, 662, 19], [2, 1015, 625, 19],
  [2, 437, 977, 19], [3, 125, 355, 19], [3, 1221, 577, 19], [3, 1066, 990, 16], [4, 1041, 749, 16],
  [5, 763, 374, 19], [5, 512, 978, 16], [5, 1269, 959, 16], [6, 107, 396, 16], [6, 767, 418, 16],
  [6, 640, 741, 19], [6, 1071, 937, 19], [7, 988, 932, 19], [7, 666, 940, 19], [8, 580, 861, 16],
];

const shields: [text: string, tile: number, x: number, y: number, w: number][] = [
  ["M40", 0, 753, 403, 172], ["A1(M)", 1, 775, 580, 225], ["M11", 2, -32, 723, 173], ["M4", 3, 306, 415, 135],
  ["M4", 4, -39, 565, 135], ["M40", 4, 310, 265, 172], ["M1", 4, 693, 126, 134], ["M25", 4, 411, 415, 172],
  ["M25", 5, -92, 869, 173], ["M20", 5, 81, 764, 173], ["M3", 6, 939, -1, 135],
];

function MapCanvas() {
  return (
    <svg viewBox="0 0 4050 3000" className="block h-[1000px] w-[1350px] bg-[#616161] font-['Roboto',sans-serif]">
      <Areas k="parks" fill="#48613c" />
      <Areas k="soft" fill="#506446" />
      <Areas k="woods" fill="#466340" />
      <Areas k="urban" fill="#5c5c5c" />
      <Areas k="water" fill="#345973" />
      <Lines k="minor" stroke="#6a6a6a" width={5} />
      <Lines k="roads" stroke="#66522b" width={8} />
      <Lines k="trunk" stroke="#5e4d2a" width={16} />
      <Lines k="motorway" stroke="#5e4f2b" width={26} />
      <Lines k="trunk" stroke="#786731" width={8} />
      <Lines k="motorway" stroke="#746330" width={18} />
      {dots.map(([t, x, y, r], i) => (
        <circle key={i} cx={tiles[t].x + x} cy={tiles[t].y + y} r={r} fill="#616161" stroke="#191919" strokeWidth={r > 17 ? 7 : 6} />
      ))}
      <g transform="translate(2347 1444)">
        <circle r={31} fill="#000" />
        <circle r={20} fill="#616161" />
        <circle r={13} fill="#000" />
      </g>
      {labels.map(([text, t, x, y, w, kind], i) => (
        <text
          key={i}
          x={tiles[t].x + x - 4}
          y={tiles[t].y + y}
          textLength={w + 6}
          lengthAdjust="spacingAndGlyphs"
          fontSize={kind === "city" ? 114 : 98}
          fontWeight={kind === "city" ? 500 : 400}
          fontStyle={kind === "parkItalic" ? "italic" : "normal"}
          fill={kind === "park" || kind === "parkItalic" ? "#1a2a19" : kind === "small" ? "#222222" : "#161616"}
          stroke="#616161"
          strokeOpacity={0.7}
          strokeWidth={22}
          strokeLinejoin="round"
          paintOrder="stroke"
        >
          {text}
        </text>
      ))}
      {shields.map(([text, t, x, y, w], i) => (
        <g key={i} transform={`translate(${tiles[t].x + x} ${tiles[t].y + y})`}>
          <rect width={w} height={97} rx={13} fill="#35334c" />
          <text x={w / 2} y={72} textAnchor="middle" fontSize={67} fontWeight={700} fill="#7c7c7c">
            {text}
          </text>
        </g>
      ))}
      <g className="font-['Liberation_Sans',sans-serif]" fontSize={112.5} fill="#ffffff" fillOpacity={0.5}>
        {[279, 2199].map((y) =>
          [-1146, 774, 2694].map((x) => (
            <text key={`${x}-${y}`} x={x} y={y} textLength={1576}>
              For development purposes only
            </text>
          )),
        )}
      </g>
      <g transform="translate(1344 984)">
        <path
          d="M678 512C668 512 668 497 666 480C660 395 581 372 580 297A98 98 0 0 1 776 297C775 372 696 395 690 480C688 497 688 512 678 512Z"
          fill="#ea4335"
          stroke="#ffffff"
          strokeWidth={6}
        />
        <circle cx={678} cy={296} r={34} fill="#811411" />
      </g>
      <g transform="translate(-36 2004)">
        <g fill="#d8ddd4" opacity={0.78}>
          <circle cx={146} cy={882} r={70} />
          <circle cx={243} cy={902} r={50} />
          <circle cx={326} cy={902} r={50} />
          <circle cx={407} cy={902} r={50} />
          <circle cx={407} cy={938} r={46} />
          <rect x={440} y={816} width={48} height={135} />
          <circle cx={515} cy={902} r={50} />
        </g>
        <text
          className="font-['Lato',sans-serif]"
          x="84 203 286 367 452 477"
          y={937}
          fontSize={156}
          fontWeight={700}
        >
          <tspan fill="#4285f4">G</tspan>
          <tspan fill="#ea4335">o</tspan>
          <tspan fill="#fbbc05">o</tspan>
          <tspan fill="#4285f4">g</tspan>
          <tspan fill="#34a853">l</tspan>
          <tspan fill="#ea4335">e</tspan>
        </text>
      </g>
    </svg>
  );
}

function WeatherMap() {
  return (
    <section className="relative mt-[177px] ml-[113px] h-[1000px] w-[1350px] shrink-0 overflow-hidden">
      <MapCanvas />
      <div className="absolute right-[25px] bottom-[60px] flex h-[202px] w-[100px] flex-col items-center rounded-[5px] bg-white shadow-[0_2px_8px_rgba(0,0,0,0.3)]">
        <button className="flex h-[100px] w-full items-center justify-center" aria-label="Zoom in">
          <svg viewBox="0 0 46 46" className="size-[46px]" fill="#666666">
            <path d="M18 0h10v18h18v10H28v18H18V28H0V18h18z" />
          </svg>
        </button>
        <div className="h-[2px] w-[75px] bg-[#e6e6e6]" />
        <button className="flex h-[100px] w-full items-center justify-center" aria-label="Zoom out">
          <span className="h-[10px] w-[46px] bg-[#666666]" />
        </button>
      </div>
      <div className="absolute right-0 bottom-0 flex h-[35px] gap-[2px] font-['Roboto',sans-serif] text-[25px] leading-[38px] text-[#444444]">
        <span className="w-[300px] bg-[#f5f5f5]/70 pr-[3px] text-center whitespace-nowrap">Map data ©2019 Google</span>
        <span className="w-[175px] bg-[#f5f5f5]/70 pr-[3px] text-center whitespace-nowrap">Terms of Use</span>
      </div>
    </section>
  );
}

function ShowerIcon() {
  const cloud = (
    <>
      <circle cx="48.5" cy="36" r="24" />
      <circle cx="22.5" cy="65" r="22.5" />
      <circle cx="83" cy="48" r="15" />
      <circle cx="101" cy="70" r="17" />
      <path d="M22 55L48 40L83 45L101 62V87H22Z" />
    </>
  );
  return (
    <svg viewBox="0 0 140 128" className="h-[128px] w-[140px]">
      <g fill="#48484a">
        <circle cx="81" cy="21" r="21" />
        <circle cx="111" cy="29" r="13" />
        <circle cx="124" cy="48" r="15.5" />
        <path d="M64 14L81 20L112 20L128 40L124 63L112 60L60 40Z" />
      </g>
      <g fill="#2c2c2e" stroke="#2c2c2e" strokeWidth="5" clipPath="url(#edge)">
        {cloud}
      </g>
      <clipPath id="edge">
        <path d="M62 12L82 10L124 50L118 63L95 60Z" />
      </clipPath>
      <g fill="#fff" stroke="#fff" strokeWidth="3">
        {cloud}
      </g>
      <g fill="#f2f2f0">{cloud}</g>
      <g stroke="#48484a" strokeWidth="7.5" strokeLinecap="round">
        <path d="M40 83.5L38.7 87.5" stroke="#222224" />
        <path d="M33 102.500L31 109" />
        <path d="M54.500 100L52.500 106.500" />
        <path d="M77 95.500L76.300 97.500" />
        <path d="M48.500 117.500L47.800 119.500" />
        <path d="M69.500 116.500L67.500 122" />
      </g>
    </svg>
  );
}

const rows: [string, string][] = [
  ["Humidity", "72 %"],
  ["Pressure", "998 hpa"],
  ["Sunrise", "7:01"],
  ["Sunset", "18:41"],
  ["Geo coords", "51.48, -0.36"],
];

export default function App() {
  return (
    <main className="flex h-[1392px] w-[2896px] overflow-hidden bg-white font-['Open_Sans',sans-serif]">
      <section className="ml-[95px] flex w-[1274px] shrink-0 flex-col pt-[47px]">
        <form className="flex h-[95px] overflow-hidden rounded-[10px] border-[3px] border-[#ced4da] text-[39px] tracking-[-0.6px] text-[#495057]">
          <div className="flex flex-1 items-center pt-[3px] pl-[29px]">London</div>
          <div className="flex w-[180px] items-center justify-center border-l-[3px] border-[#ced4da] bg-[#e9ecef] pt-[3px]">Search</div>
        </form>
        <h2 className="mt-[91px] text-center font-['Liberation_Sans',sans-serif] text-[50px] leading-[60px] text-[#d2691e]">
          Current weather and forecast in your city . . .
        </h2>
        <h3 className="mt-[105px] text-center font-['Liberation_Sans',sans-serif] text-[45px] leading-[54px] font-bold text-[#4f4f4f]">
          Weather in Hounslow, GB
        </h3>
        <div className="mt-[96px] flex h-[128px] items-center pl-[510px]">
          <ShowerIcon />
          <span className="-mt-[12px] ml-[67px] text-[44px] font-semibold tracking-[-0.8px] text-[#555555]">62 °F</span>
        </div>
        <div className="mt-[71px] text-center text-[59.500px] leading-[72px] font-bold text-[#ff0000]">SHOWER RAIN</div>
        <div className="mt-[47px] border border-[#fcfcfc] text-[39px] tracking-[-0.5px] text-[#212529]">
          {rows.map(([name, value], i) => (
            <div
              key={name}
              className={`flex items-center text-center ${i % 2 === 0 ? "h-[84px] gap-[2px]" : "h-[88px] bg-[#fdfdfd]"}`}
            >
              <span className={`flex h-full flex-1 items-center justify-center pt-[3px] ${i % 2 === 0 ? "bg-[#f0f0f0]" : ""}`}>{name}</span>
              <span className={`flex h-full flex-1 items-center justify-center pt-[3px] ${i % 2 === 0 ? "bg-[#f0f0f0]" : ""}`}>{value}</span>
            </div>
          ))}
        </div>
      </section>
      <WeatherMap />
    </main>
  );
}
